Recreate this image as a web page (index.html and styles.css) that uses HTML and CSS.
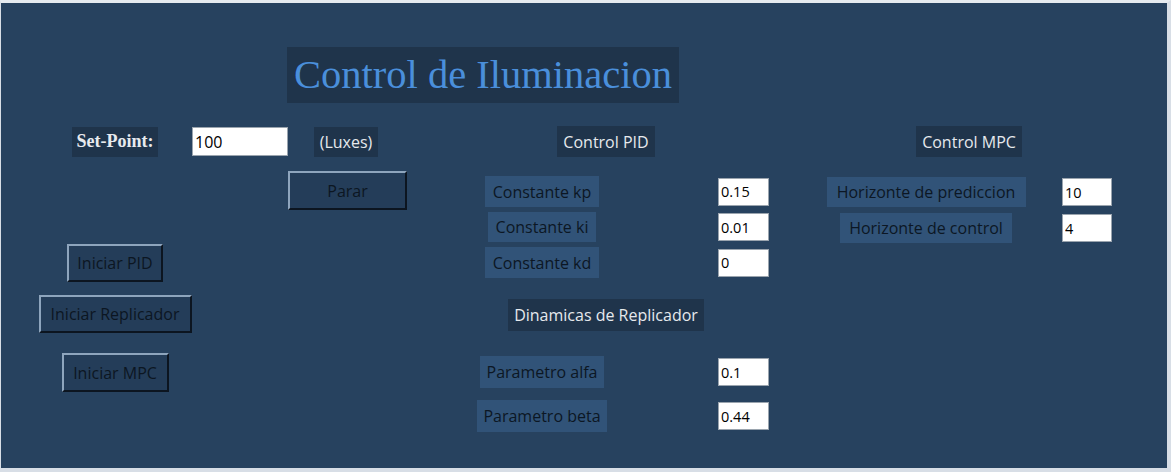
FILE: index.html
```html
<!DOCTYPE html>
<html lang="es">
<head>
<meta charset="utf-8">
<title>Control de Iluminacion</title>
<link rel="stylesheet" href="styles.css">
</head>
<body>
<div class="window">
  <header class="title-row">
    <h1 class="title">Control de Iluminacion</h1>
  </header>
  <main class="panel">
    <section class="col col-left">
      <div class="sp-row">
        <span class="lbl lbl-dark lbl-serif sp-label">Set-Point:</span>
        <input class="entry entry-sp" type="text" value="100">
        <span class="lbl lbl-dark luxes">(Luxes)</span>
      </div>
      <button class="btn btn-parar">Parar</button>
      <div class="start-buttons">
        <button class="btn btn-pid">Iniciar PID</button>
        <button class="btn btn-rep">Iniciar Replicador</button>
        <button class="btn btn-mpc">Iniciar MPC</button>
      </div>
    </section>

    <section class="col col-mid">
      <div class="head head-mid"><span class="lbl lbl-dark">Control PID</span></div>
      <div class="param-group pid-group">
        <div class="param-row"><div class="cell"><span class="lbl lbl-blue w-kp">Constante kp</span></div><input class="entry entry-sm" type="text" value="0.15"></div>
        <div class="param-row"><div class="cell"><span class="lbl lbl-blue w-ki">Constante ki</span></div><input class="entry entry-sm" type="text" value="0.01"></div>
        <div class="param-row"><div class="cell"><span class="lbl lbl-blue w-kd">Constante kd</span></div><input class="entry entry-sm" type="text" value="0"></div>
      </div>
      <div class="head head-rep"><span class="lbl lbl-dark lbl-tall">Dinamicas de Replicador</span></div>
      <div class="param-group rep-group">
        <div class="param-row"><div class="cell"><span class="lbl lbl-blue lbl-tall w-alfa">Parametro alfa</span></div><input class="entry entry-sm" type="text" value="0.1"></div>
        <div class="param-row"><div class="cell"><span class="lbl lbl-blue lbl-tall w-beta">Parametro beta</span></div><input class="entry entry-sm" type="text" value="0.44"></div>
      </div>
    </section>

    <section class="col col-right">
      <div class="head head-right"><span class="lbl lbl-dark">Control MPC</span></div>
      <div class="param-group mpc-group">
        <div class="param-row"><div class="cell"><span class="lbl lbl-blue w-pred">Horizonte de prediccion</span></div><input class="entry entry-mpc" type="text" value="10"></div>
        <div class="param-row"><div class="cell"><span class="lbl lbl-blue w-ctrl">Horizonte de control</span></div><input class="entry entry-mpc" type="text" value="4"></div>
      </div>
    </section>
  </main>
</div>
</body>
</html>
```

FILE: styles.css
```css
* { box-sizing: border-box; }

html, body {
  margin: 0;
  padding: 0;
  background: #e4e9ef;
}

body {
  width: 1171px;
  height: 472px;
  overflow: hidden;
  font-family: "Open Sans", "Noto Sans", sans-serif;
}

.window {
  width: 1171px;
  height: 472px;
  background: #27425f;
  border-top: 3px solid #e6ebf0;
  border-left: 1px solid #d8dee6;
  border-right: 4px solid #d8dee6;
  border-bottom: 4px solid #d8dee6;
  display: flex;
  flex-direction: column;
}

/* ---------- title ---------- */
.title-row {
  padding-top: 44px;
  padding-left: 286px;
  display: flex;
}

.title {
  margin: 0;
  height: 56px;
  width: 392px;
  background: #1f344b;
  color: #4a8fdb;
  font-family: "Liberation Serif", "Times New Roman", serif;
  font-weight: normal;
  font-size: 40.5px;
  line-height: 56px;
  text-align: center;
  white-space: nowrap;
}

/* ---------- generic widgets ---------- */
.lbl {
  display: inline-flex;
  align-items: center;
  justify-content: center;
  height: 31px;
  font-size: 16px;
  white-space: nowrap;
}

.lbl-tall { height: 32px; }

.lbl-dark {
  background: #1f344b;
  color: #e6e9ed;
  padding: 0 6px;
}

.lbl-blue {
  background: #315378;
  color: #0c1724;
}

.lbl-serif {
  font-family: "Liberation Serif", "Times New Roman", serif;
  font-weight: bold;
  font-size: 18px;
  color: #e8eaee;
}

.entry {
  background: #ffffff;
  border: 1px solid #9aa4ae;
  color: #000;
  font-family: "Open Sans", "Noto Sans", sans-serif;
  font-size: 14.5px;
  padding: 0 2px;
  outline: none;
  margin: 0;
}

.btn {
  display: inline-flex;
  align-items: center;
  justify-content: center;
  background: #243d59;
  color: #0c1622;
  font-family: "Open Sans", "Noto Sans", sans-serif;
  font-size: 16px;
  border-style: solid;
  border-width: 2px;
  border-color: #8ea5bd #0c1520 #0c1520 #8ea5bd;
  padding: 0;
  white-space: nowrap;
}

/* ---------- panel ---------- */
.panel {
  display: grid;
  grid-template-columns: 433px 350px 298px;
  padding-top: 23px;
  padding-left: 36px;
}

.col {
  display: flex;
  flex-direction: column;
  align-items: flex-start;
}

/* ---------- left column ---------- */
.sp-row {
  display: flex;
  align-items: center;
  height: 31px;
  margin-left: 35px;
}

.sp-label { width: 86px; height: 30px; }

.entry-sp {
  width: 96px;
  height: 29px;
  margin-left: 34px;
  font-size: 16px;
}

.luxes {
  width: 64px;
  height: 30px;
  margin-left: 26px;
  padding: 0;
}

.btn-parar {
  width: 119px;
  height: 39px;
  margin-top: 14px;
  margin-left: 251px;
}

.start-buttons {
  width: 156px;
  display: flex;
  flex-direction: column;
  align-items: center;
  margin-top: 34px;
}

.btn-pid { width: 96px; height: 38px; }
.btn-rep { width: 153px; height: 38px; margin-top: 13px; }
.btn-mpc { width: 107px; height: 39px; margin-top: 20px; }

/* ---------- middle column ---------- */
.head {
  display: flex;
  justify-content: center;
}

.head-mid { width: 274px; margin-left: -1px; }

.param-group {
  display: flex;
  flex-direction: column;
}

.param-row {
  display: grid;
  grid-template-columns: 144px 51px;
  column-gap: 104px;
  align-items: center;
}

.cell {
  display: flex;
  justify-content: center;
}

.pid-group { margin-top: 19px; gap: 5px; }

.w-kp { width: 114px; }
.w-ki { width: 108px; height: 30px; }
.w-kd { width: 114px; }

.entry-sm { width: 51px; height: 28px; }

.head-rep { width: 274px; margin-top: 21px; margin-left: -1px; }

.rep-group { margin-top: 25px; gap: 12px; }

.w-alfa { width: 124px; }
.w-beta { width: 130px; }

/* ---------- right column ---------- */
.head-right { width: 298px; }

.mpc-group { margin-top: 20px; gap: 6px; }

.mpc-group .param-row {
  grid-template-columns: 212px 50px;
  column-gap: 30px;
}

.w-pred { width: 199px; height: 30px; }
.w-ctrl { width: 172px; height: 30px; }

.entry-mpc { width: 50px; height: 28px; }
```
